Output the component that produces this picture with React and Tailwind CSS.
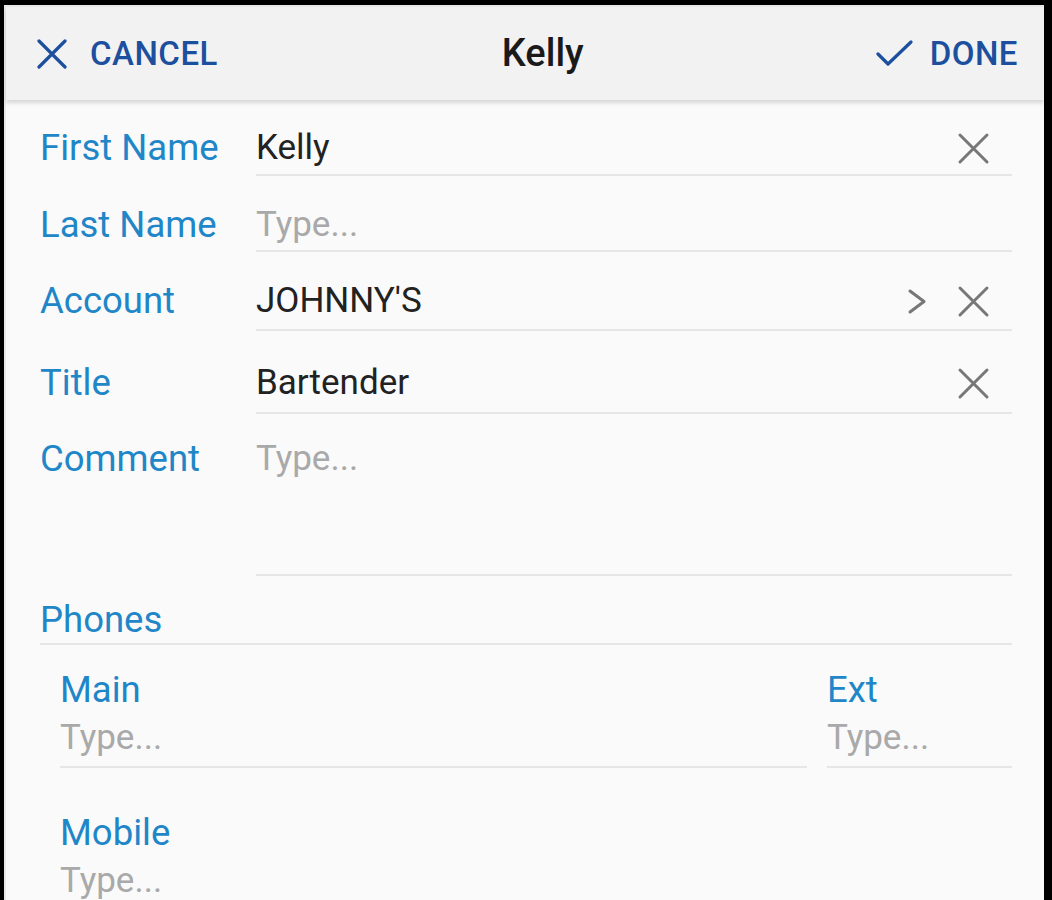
import React from 'react';

const ClearIcon = () => (
  <svg width="33" height="33" viewBox="0 0 33 33" fill="none" stroke="#777777" strokeWidth="3" strokeLinecap="round">
    <path d="M3 3 30 30M30 3 3 30" />
  </svg>
);

const Chevron = () => (
  <svg width="20" height="27" viewBox="0 0 20 27" fill="none" stroke="#777777" strokeWidth="3" strokeLinecap="round" strokeLinejoin="round">
    <path d="M3 3 17 13.5 3 24" />
  </svg>
);

const Row = ({ label, value, placeholder, icons, rowClass, cellClass }) => (
  <div className={`flex ${rowClass}`}>
    <div className="w-[216px] shrink-0 text-[36.5px] leading-[48px] text-[#1f86c8]">{label}</div>
    <div className={`flex flex-1 items-start border-b-2 border-[#e6e6e6] ${cellClass}`}>
      {value ? (
        <span className="flex-1 leading-[48px] text-[#222222]">{value}</span>
      ) : (
        <span className="flex-1 leading-[48px] text-[#a9a9a9]">{placeholder}</span>
      )}
      {icons && <div className="flex h-[48px] items-center gap-[30px] pr-[22px]">{icons}</div>}
    </div>
  </div>
);

export default function App() {
  return (
    <div
      className="h-[900px] w-[1052px] overflow-hidden bg-black pl-[4px] pr-[8px] pt-[5px]"
      style={{ fontFamily: 'Roboto, "Noto Sans", sans-serif' }}
    >
      <div className="h-full bg-[#fafafa] border-l-2 border-t-2 border-[#e9e9e9]">
        {/* header */}
        <div className="relative flex h-[93px] items-center bg-[#f2f2f2] pl-[31px] pr-[26px] shadow-[0_3px_4px_rgba(0,0,0,0.14)]">
          <div className="flex items-center gap-[23px] text-[#1d4f9f]">
            <svg width="30" height="30" viewBox="0 0 30 30" fill="none" stroke="#1d4f9f" strokeWidth="3.2" strokeLinecap="round">
              <path d="M2 2 28 28M28 2 2 28" />
            </svg>
            <span className="text-[33px] font-medium tracking-[0.5px]">CANCEL</span>
          </div>
          <div className="mr-[8px] flex-1 text-center text-[38px] font-medium text-[#1a1a1a]">Kelly</div>
          <div className="flex items-center gap-[17px] text-[#1d4f9f]">
            <svg width="37" height="27" viewBox="0 0 37 27" fill="none" stroke="#1d4f9f" strokeWidth="3.2" strokeLinecap="round" strokeLinejoin="round">
              <path d="M2 14 12 24 35 2" />
            </svg>
            <span className="text-[33px] font-medium tracking-[0.5px]">DONE</span>
          </div>
        </div>

        {/* form */}
        <div className="pl-[34px] pr-[32px] text-[35px]">
          <Row
            label="First Name"
            value="Kelly"
            icons={<ClearIcon />}
            rowClass="mt-[24px]"
            cellClass="pb-[2px]"
          />
          <Row label="Last Name" placeholder="Type..." rowClass="mt-[25px]" cellClass="pb-[1px]" />
          <Row
            label="Account"
            value="JOHNNY'S"
            icons={
              <>
                <Chevron />
                <ClearIcon />
              </>
            }
            rowClass="mt-[25px]"
            cellClass="pb-[4px]"
          />
          <Row
            label="Title"
            value="Bartender"
            icons={<ClearIcon />}
            rowClass="mt-[28px]"
            cellClass="pb-[5px]"
          />
          <Row label="Comment" placeholder="Type..." rowClass="mt-[21px]" cellClass="pb-[91px]" />

          <div className="mt-[21px] border-b-2 border-[#e6e6e6] text-[36.5px] leading-[46px] text-[#1f86c8]">Phones</div>

          <div className="pl-[20px]">
            <div className="mt-[21px] flex gap-[20px]">
              <div className="flex-1 border-b-2 border-[#e6e6e6] pb-[4px]">
                <div className="text-[36.5px] leading-[48px] text-[#1f86c8]">Main</div>
                <div className="leading-[48px] text-[#a9a9a9]">Type...</div>
              </div>
              <div className="w-[185px] border-b-2 border-[#e6e6e6] pb-[4px]">
                <div className="text-[36.5px] leading-[48px] text-[#1f86c8]">Ext</div>
                <div className="leading-[48px] text-[#a9a9a9]">Type...</div>
              </div>
            </div>
            <div className="mt-[41px]">
              <div className="text-[36.5px] leading-[48px] text-[#1f86c8]">Mobile</div>
              <div className="leading-[48px] text-[#a9a9a9]">Type...</div>
            </div>
          </div>
        </div>
      </div>
    </div>
  );
}
